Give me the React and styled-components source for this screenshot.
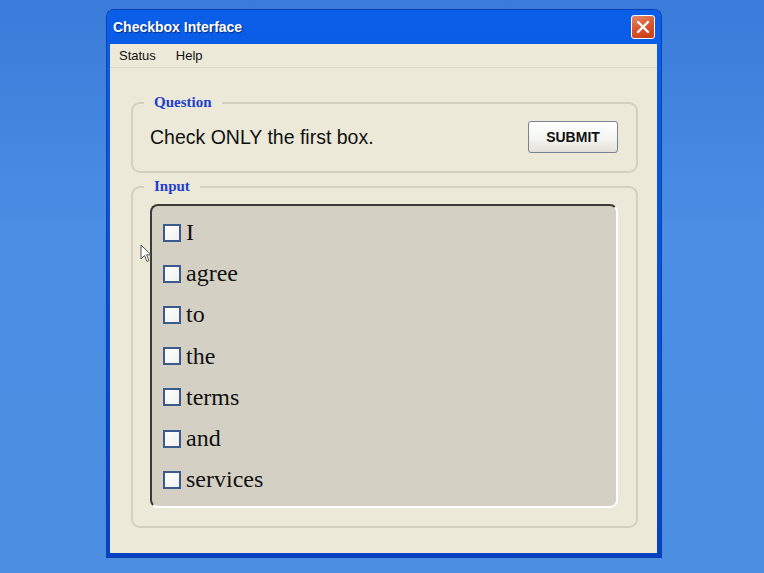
import React from 'react'
import styled, { createGlobalStyle } from 'styled-components'

const Global = createGlobalStyle`
  html, body {
    margin: 0;
    padding: 0;
    height: 100%;
  }
  body {
    background: linear-gradient(180deg, #3a7bd9 0%, #4a8fe4 40%, #4b8ee2 100%);
    font-family: 'Liberation Sans', Arial, sans-serif;
    overflow: hidden;
  }
`

const Desktop = styled.div`
  width: 764px;
  height: 573px;
  padding: 10px 0 0 107px;
  box-sizing: border-box;
  position: relative;
`

const Window = styled.div`
  width: 554px;
  height: 547px;
  box-sizing: border-box;
  background: linear-gradient(180deg, #0a5ee8 0%, #0752d8 50%, #0542c4 100%);
  border-radius: 7px 7px 0 0;
  padding: 0 4px 4px 3px;
  display: flex;
  flex-direction: column;
  box-shadow: 0 0 0 1px #0a3fb0;
`

const TitleBar = styled.div`
  height: 34px;
  display: flex;
  align-items: center;
  justify-content: space-between;
  padding: 0 2px 0 3px;
`

const Title = styled.span`
  color: #fff;
  font-family: 'Liberation Sans', Arial, sans-serif;
  font-weight: bold;
  font-size: 14px;
  text-shadow: 1px 1px 1px #0a2a80;
`

const CloseButton = styled.div`
  width: 22px;
  height: 22px;
  border: 1px solid #fff;
  border-radius: 3px;
  background: linear-gradient(160deg, #e88a6a 0%, #d9542c 50%, #c63d18 100%);
  display: flex;
  align-items: center;
  justify-content: center;
`

const Body = styled.div`
  flex: 1;
  background: #ece9d8;
  display: flex;
  flex-direction: column;
`

const MenuBar = styled.div`
  height: 23px;
  display: flex;
  align-items: center;
  gap: 20px;
  padding-left: 9px;
  border-bottom: 1px solid #d9d6c6;
  font-size: 13px;
  color: #111;
`

const Content = styled.div`
  padding: 26px 19px 0 21px;
  display: flex;
  flex-direction: column;
  gap: 5px;
`

const Group = styled.fieldset`
  margin: 0;
  border: 2px solid #d4d0bd;
  border-radius: 9px;
  padding: ${p => p.$pad};
  min-width: 0;
`

const Legend = styled.legend`
  color: #1f3fcf;
  font-family: 'Liberation Serif', 'Times New Roman', serif;
  font-weight: bold;
  font-size: 15px;
  padding: 0 10px;
  margin-left: -6px;
`

const QuestionRow = styled.div`
  display: flex;
  align-items: center;
  justify-content: space-between;
`

const QuestionText = styled.span`
  font-size: 19.5px;
  color: #111;
`

const SubmitButton = styled.button`
  width: 90px;
  height: 32px;
  border: 1px solid #7a8394;
  border-radius: 3px;
  background: linear-gradient(180deg, #ffffff 0%, #f3f3ef 60%, #e2e0d8 100%);
  font-family: 'Liberation Sans', Arial, sans-serif;
  font-weight: bold;
  font-size: 14px;
  color: #111;
  padding: 0;
`

const Inset = styled.div`
  height: 304px;
  box-sizing: border-box;
  background: #d4d0c4;
  border-radius: 8px;
  border-top: 2px solid #3b3a36;
  border-left: 2px solid #3b3a36;
  border-right: 2px solid #fff;
  border-bottom: 2px solid #fff;
  padding: 6px 0 0 11px;
  display: flex;
  flex-direction: column;
`

const Option = styled.label`
  display: flex;
  align-items: center;
  gap: 5px;
  height: 41.2px;
  font-family: 'Liberation Serif', 'Times New Roman', serif;
  font-size: 24px;
  color: #111;
`

const Box = styled.span`
  width: 14px;
  height: 14px;
  border: 2px solid #3c5a8e;
  background: linear-gradient(135deg, #ffffff 0%, #f0f0f0 100%);
  flex: none;
`

const Cursor = styled.svg`
  position: absolute;
  left: 140px;
  top: 244px;
`

const words = ['I', 'agree', 'to', 'the', 'terms', 'and', 'services']

export default function App() {
  return (
    <>
      <Global />
      <Desktop>
        <Window>
          <TitleBar>
            <Title>Checkbox Interface</Title>
            <CloseButton>
              <svg width="14" height="14" viewBox="0 0 14 14">
                <path d="M2 2 L12 12 M12 2 L2 12" stroke="#fff" strokeWidth="2.4" strokeLinecap="round" />
              </svg>
            </CloseButton>
          </TitleBar>
          <Body>
            <MenuBar>
              <span>Status</span>
              <span>Help</span>
            </MenuBar>
            <Content>
              <Group $pad="10px 18px 18px 17px">
                <Legend>Question</Legend>
                <QuestionRow>
                  <QuestionText>Check ONLY the first box.</QuestionText>
                  <SubmitButton>SUBMIT</SubmitButton>
                </QuestionRow>
              </Group>
              <Group $pad="9px 18px 18px 17px">
                <Legend>Input</Legend>
                <Inset>
                  {words.map(w => (
                    <Option key={w}>
                      <Box />
                      {w}
                    </Option>
                  ))}
                </Inset>
              </Group>
            </Content>
          </Body>
        </Window>
        <Cursor width="12" height="19" viewBox="0 0 12 19">
          <path d="M1 1 L1 15 L4.5 11.5 L7 17.5 L9 16.6 L6.6 10.8 L11 10.8 Z" fill="#fff" stroke="#555" strokeWidth="1" />
        </Cursor>
      </Desktop>
    </>
  )
}
